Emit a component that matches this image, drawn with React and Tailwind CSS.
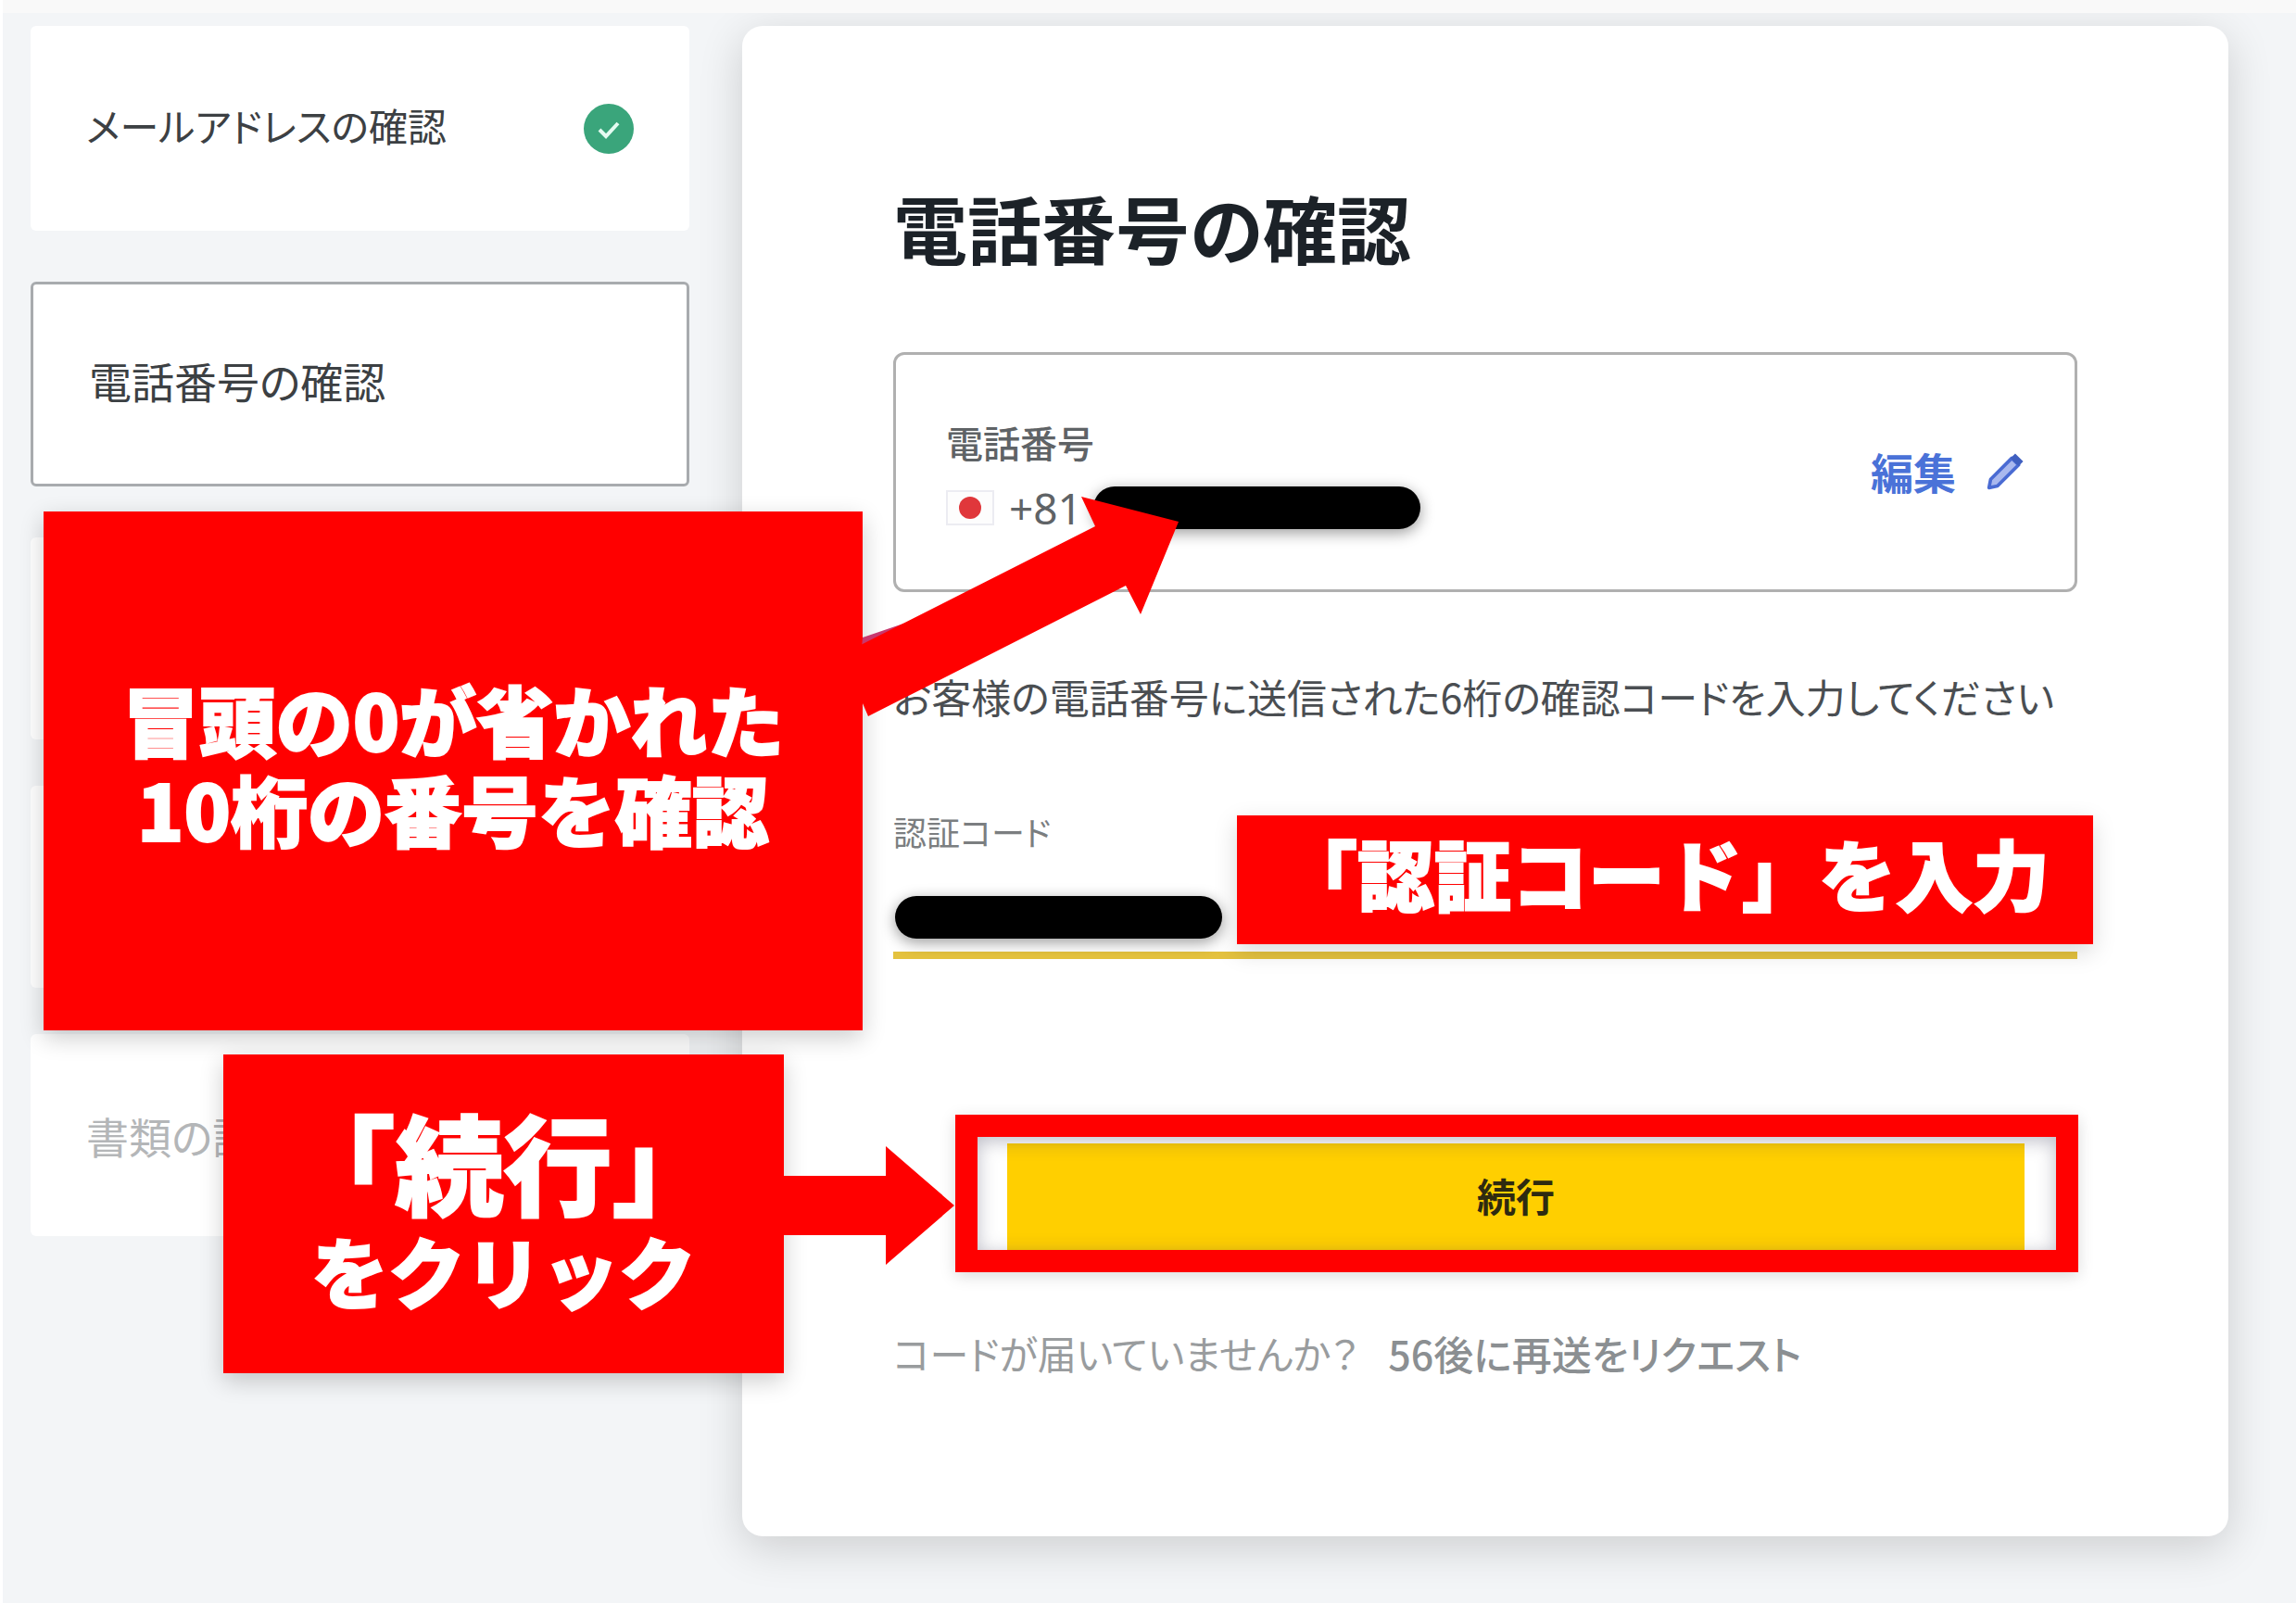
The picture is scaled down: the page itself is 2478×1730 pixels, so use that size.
import { useState } from "react";

const steps = [
  { id: "email", label: "メールアドレスの確認", done: true },
  { id: "phone", label: "電話番号の確認", active: true },
];

const CheckBadge = () => (
  <svg className="h-[54px] w-[54px] shrink-0" viewBox="0 0 54 54" aria-hidden="true">
    <circle cx="27" cy="27" r="27" fill="#3aa57b" />
    <path d="M17 28l7 7 13-14" fill="none" stroke="#e4fbf1" strokeWidth="4" />
  </svg>
);

const PencilIcon = () => (
  <svg className="h-[42px] w-[42px]" viewBox="0 0 46 46" aria-hidden="true">
    <path
      d="M4 42l2-10L31 7l8 8-25 25z"
      fill="#a9b8ee"
      stroke="#4a6bd3"
      strokeWidth="4"
      strokeLinejoin="round"
    />
    <path d="M31 7l4-4 8 8-4 4z" fill="#4060c0" stroke="#4060c0" strokeWidth="2" />
  </svg>
);

// Black bar that hides private data
const Redacted = () => (
  <span className="block h-[46px] w-[353px] rounded-full bg-black shadow-[0_4px_16px_rgba(0,0,0,0.4)]" />
);

const Sidebar = () => (
  <nav className="w-[711px] shrink-0">
    <ul className="flex flex-col gap-[55px]">
      {steps.map((step) => (
        <li
          key={step.id}
          className={
            step.active
              ? "flex h-[221px] items-center justify-between rounded-md border-3 border-[#a8abae] bg-white px-[60px] text-[46px] text-[#3c4043]"
              : "flex h-[221px] items-center justify-between rounded-md bg-white px-[60px] text-[42px] text-[#3c4043]"
          }
        >
          <span className="pb-2">{step.label}</span>
          {step.done && <CheckBadge />}
        </li>
      ))}
    </ul>
    <ul className="mt-[55px] flex flex-col gap-[50px]">
      <li className="h-[218px] rounded-md bg-white" />
      <li className="h-[218px] rounded-md bg-white" />
      <li className="flex h-[218px] items-center rounded-md bg-white px-[60px] text-[46px] text-[#b4b6b8]">
        書類の認証
      </li>
    </ul>
  </nav>
);

const PhoneCard = () => (
  <div className="mt-[88px] flex items-center justify-between rounded-xl border-3 border-[#b0b0b0] px-[54px] pt-16 pb-[58px]">
    <div className="flex flex-col gap-[11px]">
      <span className="text-[40px] leading-[60px] font-medium text-[#5f6366]">電話番号</span>
      <div className="flex items-center text-[46px] leading-[60px] text-[#5f6366]">
        <svg className="mr-4 h-[38px] w-[52px]" viewBox="0 0 52 38" aria-hidden="true">
          <rect x="1" y="1" width="50" height="36" fill="#fdfdfd" stroke="#ececf2" strokeWidth="2" />
          <circle cx="26" cy="19" r="12" fill="#e0373b" />
        </svg>
        <span className="mr-3 font-['Noto_Sans']">+81</span>
        <Redacted />
      </div>
    </div>
    <button type="button" className="flex items-center gap-8 pb-2 text-[46px] font-bold text-[#4a72d8]">
      編集
      <PencilIcon />
    </button>
  </div>
);

const CodeField = () => {
  const [code, setCode] = useState("");

  return (
    <div className="relative mt-[86px]">
      <label htmlFor="code" className="block text-[36px] leading-[60px] text-[#7b7e80]">
        認証コード
      </label>
      <input
        id="code"
        type="text"
        inputMode="numeric"
        value={code}
        onChange={(e) => setCode(e.target.value)}
        className="block h-[108px] w-full border-b-8 border-[#e4c23f] text-[42px] outline-none"
      />
      <div className="absolute top-[100px] left-0.5">
        <Redacted />
      </div>
      <p className="absolute top-[13px] -right-[17px] flex h-[139px] w-[924px] items-center justify-center bg-[#ff0000] pb-4 text-[83px] leading-[97px] font-black whitespace-nowrap text-white shadow-[0_8px_24px_rgba(0,0,0,0.15)] [-webkit-text-stroke:2px_white] [font-feature-settings:normal]">
        「認証コード」を入力
      </p>
    </div>
  );
};

const Annotations = () => (
  <div className="text-center text-[83px] leading-[97px] font-black whitespace-nowrap text-white [-webkit-text-stroke:2px_white] [font-feature-settings:normal]">
    <div className="absolute top-[552px] left-11 flex h-[560px] w-[884px] flex-col items-center justify-center bg-[#ff0000] pb-4 shadow-[0_8px_24px_rgba(0,0,0,0.2)]">
      <p>冒頭の0が省かれた</p>
      <p>10桁の番号を確認</p>
    </div>
    <div className="absolute top-[1138px] left-[238px] flex h-[344px] w-[605px] flex-col items-center justify-center bg-[#ff0000] pb-5 shadow-[0_8px_24px_rgba(0,0,0,0.2)]">
      <p className="text-[117px] leading-[140px]">「続行」</p>
      <p>をクリック</p>
    </div>

    {/* Arrow to the phone number */}
    <svg className="absolute top-[530px] left-[922px] h-[250px] w-[350px]" viewBox="925 530 350 250" aria-hidden="true">
      <path d="M931 688l44-15 15-4-60 30z" fill="#c8386e" />
      <path d="M925 698L1182 568L1167 536L1272 563L1231 663L1215 632L937 773L925 745z" fill="#ff0000" />
    </svg>
    {/* Arrow to the submit button */}
    <svg className="absolute top-[1237px] left-[837px] h-32 w-[190px]" viewBox="0 0 190 128" aria-hidden="true">
      <path d="M0 32H116V0L190 64L116 128V96H0z" fill="#ff0000" />
    </svg>
  </div>
);

const App = () => {
  return (
    <div className="relative min-h-screen overflow-hidden border-l-3 border-white bg-[#f3f5f7] font-['Noto_Sans_CJK_JP',sans-serif] [font-feature-settings:'palt']">
      <header className="relative z-10 h-[14px] bg-[#f9f9f9]" />
      <div className="flex items-start gap-[57px] pt-[14px] pr-[73px] pl-[30px]">
        <Sidebar />
        <main className="min-w-0 flex-1 rounded-[22px] bg-white px-[163px] pt-[168px] pb-[168px] shadow-[0_12px_48px_rgba(0,0,0,0.16)]">
          <h1 className="text-[80px] leading-[96px] font-bold text-[#1c2228]">電話番号の確認</h1>
          <PhoneCard />
          <p className="mt-[82px] text-[43px] leading-[60px] whitespace-nowrap text-[#4a4e52]">
            お客様の電話番号に送信された6桁の確認コードを入力してください
          </p>
          <CodeField />
          <div className="relative mt-[199px] mr-[57px] ml-[123px]">
            <button type="button" className="block h-[115px] w-full bg-[#ffcf00] pb-1 text-[42px] font-bold text-[#2e2a10]">
              続行
            </button>
            <span className="pointer-events-none absolute -top-[31px] -right-[58px] -bottom-6 -left-14 border-24 border-[#ff0000] shadow-[0_4px_16px_rgba(0,0,0,0.15)]">
              <span className="block h-full shadow-[inset_0_4px_20px_rgba(60,60,90,0.35)]" />
            </span>
          </div>
          <p className="mt-[81px] flex gap-8 text-[42px] leading-[60px] whitespace-nowrap text-[#999c9e]">
            コードが届いていませんか？
            <span className="text-[43px] font-medium text-[#8b8f92]">56後に再送をリクエスト</span>
          </p>
        </main>
      </div>
      <Annotations />
    </div>
  );
};

export default App;
